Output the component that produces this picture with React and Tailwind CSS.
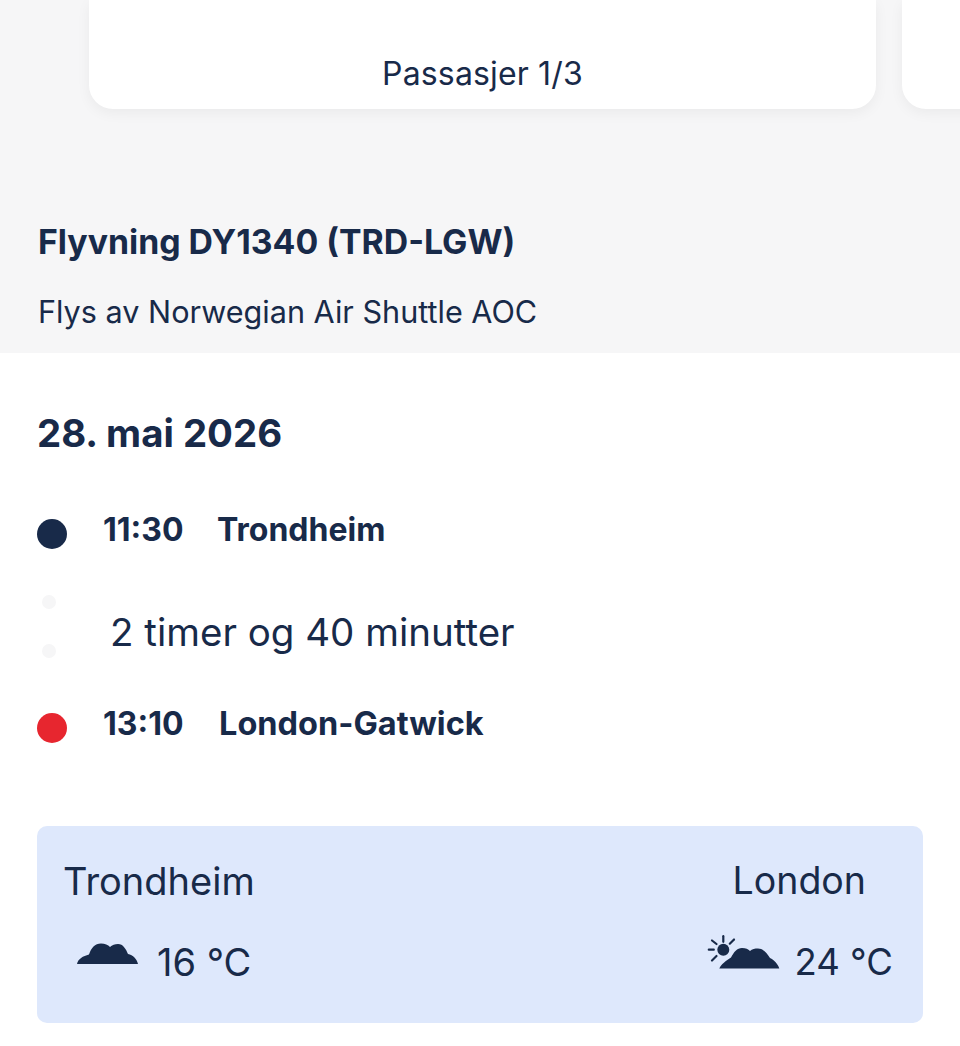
const navy = "text-[#182a49]";

const CloudIcon = ({ className }) => (
  <svg viewBox="0 0 62 22" className={className} fill="#182a49">
    <path d="M0 21C1 16 6 13 12 11.500C14 5 18 .5 24 .5C28 .5 31 2 33 4C35 2 38 1 41 1C46 1 49 6 51 11C56 12 60 16 61 21Z" />
  </svg>
);

const SunCloudIcon = ({ className }) => (
  <svg viewBox="0 0 73 35" className={className} fill="#182a49">
    <circle cx="16.300" cy="14.700" r="6" />
    <g stroke="#182a49" strokeWidth="2.200" strokeLinecap="round">
      <path d="M16.300 1.200V6.800" />
      <path d="M1.800 14.700H6.800" />
      <path d="M5 5.500L9.500 9" />
      <path d="M27 4.500L22.800 8.700" />
      <path d="M5 25.500L9.500 21" />
    </g>
    <path d="M12.300 33.500C14 29 19 26 24 22.500C27 17 30 13 35 13C39 13 41 14 43 16C45 14 48 13.500 51 13.500C56 13.500 60 18 63 23C67 25 71 29 72.300 33.500Z" />
  </svg>
);

const App = () => {
  return (
    <div className={`w-[960px] h-[1046px] overflow-hidden bg-white font-['Inter',sans-serif] ${navy}`}>
      <section className="h-[353px] bg-[#f6f6f7] overflow-hidden">
        <div className="flex gap-[26px] pl-[89px] h-[109px]">
          <div className="w-[787px] shrink-0 flex items-end justify-center pb-[15px] bg-white rounded-b-[24px] shadow-[0_4px_14px_rgba(0,0,0,0.05)]">
            <span className="text-[32px] leading-[40px] tracking-[0.15px]">Passasjer 1/3</span>
          </div>
          <div className="w-[787px] shrink-0 bg-white rounded-b-[24px] shadow-[0_4px_14px_rgba(0,0,0,0.05)]" />
        </div>
        <h2 className="mt-[109px] pl-[38px] text-[33.800px] leading-[48px] font-bold">Flyvning DY1340 (TRD-LGW)</h2>
        <p className="mt-[26px] pl-[38px] text-[30.600px] leading-[40px]">Flys av Norwegian Air Shuttle AOC</p>
      </section>

      <section className="px-[37px]">
        <h3 className="mt-[54px] text-[38.400px] leading-[52px] font-bold">28. mai 2026</h3>

        <div className="mt-[47px] flex items-start">
          <span className="mt-[13px] w-[30px] h-[30px] rounded-full bg-[#182a49]" />
          <span className="ml-[36px] mt-[2px] text-[32px] leading-[44px] font-bold w-[114px]">11:30</span>
          <span className="mt-[2px] text-[32px] leading-[44px] font-bold">Trondheim</span>
        </div>

        <div className="mt-[28px] flex items-center h-[92px]">
          <div className="w-[24px] flex flex-col items-center gap-[35px]">
            <span className="w-[14px] h-[14px] rounded-full bg-[#f6f6f7]" />
            <span className="w-[14px] h-[14px] rounded-full bg-[#f6f6f7]" />
          </div>
          <span className="ml-[49px] mt-[12px] text-[38.500px] leading-[48px]">2 timer og 40 minutter</span>
        </div>

        <div className="mt-[30px] flex items-start">
          <span className="mt-[11px] w-[30px] h-[30px] rounded-full bg-[#e7262f]" />
          <span className="ml-[36px] text-[32px] leading-[44px] font-bold w-[116px]">13:10</span>
          <span className="text-[32.500px] leading-[44px] font-bold">London-Gatwick</span>
        </div>

        <div className="mt-[80px] w-[886px] h-[197px] rounded-[10px] bg-[#dee8fc] flex justify-between pl-[26px] pr-[30px] pt-[32px]">
          <div className="flex flex-col">
            <span className="text-[38px] leading-[46px]">Trondheim</span>
            <div className="mt-[35px] flex items-center pl-[14px]">
              <CloudIcon className="w-[62px] h-[22px] -mt-[16px]" />
              <span className="ml-[18px] text-[38px] leading-[46px]">16 °C</span>
            </div>
          </div>
          <div className="flex flex-col items-end">
            <span className="mr-[27px] text-[37.500px] leading-[46px]">London</span>
            <div className="mt-[35px] flex items-center">
              <SunCloudIcon className="w-[73px] h-[35px] -mt-[19px]" />
              <span className="ml-[15px] text-[36.500px] leading-[46px]">24 °C</span>
            </div>
          </div>
        </div>
      </section>
    </div>
  );
};

export default App;
